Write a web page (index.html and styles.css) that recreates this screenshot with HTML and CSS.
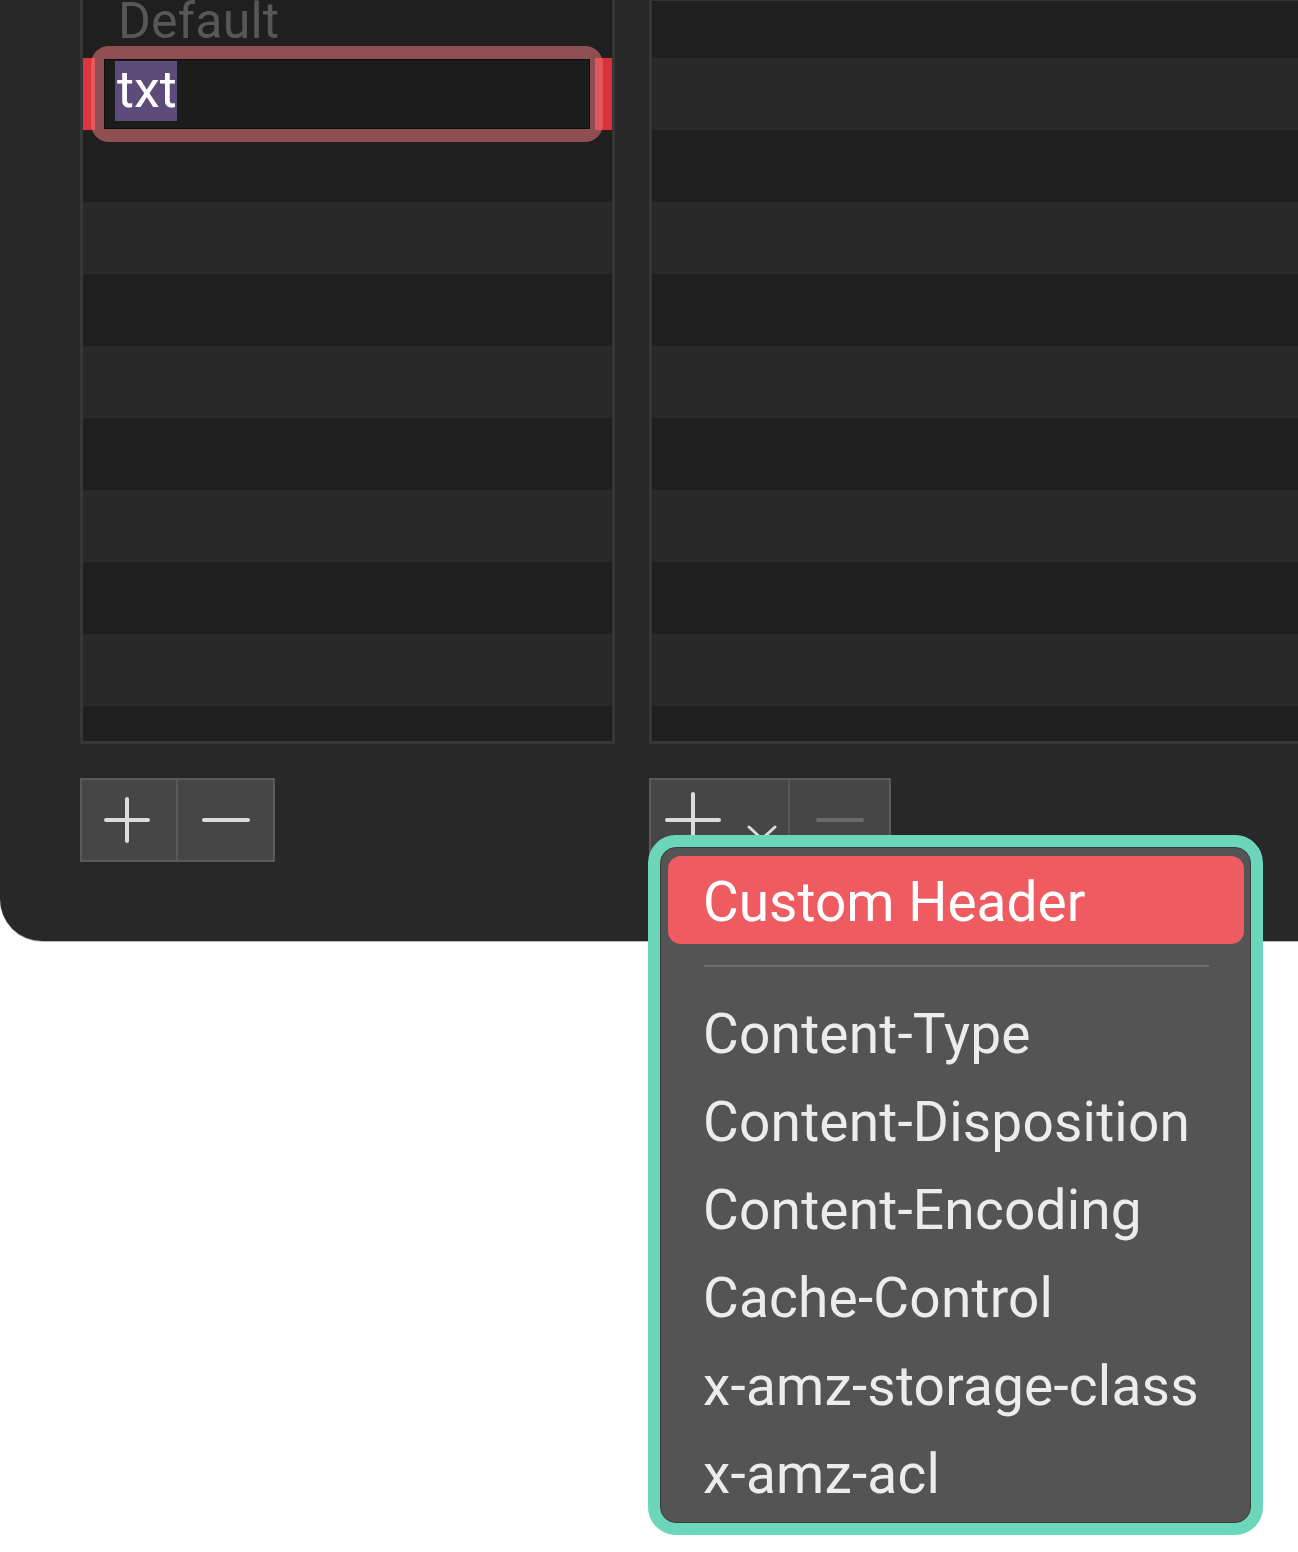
FILE: index.html
```html
<!DOCTYPE html>
<html>
<head>
<meta charset="utf-8">
<title>Headers</title>
<link rel="stylesheet" href="styles.css">
</head>
<body>
<div class="page">
  <div class="window">
    <div class="cols">
      <div class="col">
        <div class="table">
          <div class="row first dark"><span class="placeholder">Default</span></div>
          <div class="row dark edit-row">
            <span class="bar bar-l"></span>
            <span class="bar bar-r"></span>
            <div class="ring"><div class="field"><span class="sel">txt</span></div></div>
          </div>
          <div class="row dark"></div>
          <div class="row light"></div>
          <div class="row dark"></div>
          <div class="row light"></div>
          <div class="row dark"></div>
          <div class="row light"></div>
          <div class="row dark"></div>
          <div class="row light"></div>
          <div class="row dark"></div>
        </div>
        <div class="seg seg-left">
          <div class="seg-btn seg-plus">
            <svg width="46" height="46" viewBox="0 0 46 46"><path d="M23 2V44M2 23H44" stroke="#dcdcdc" stroke-width="4" stroke-linecap="round" fill="none"/></svg>
          </div>
          <div class="seg-btn seg-minus">
            <svg width="48" height="46" viewBox="0 0 48 46"><path d="M2 23H46" stroke="#dcdcdc" stroke-width="4" stroke-linecap="round" fill="none"/></svg>
          </div>
        </div>
      </div>
      <div class="col">
        <div class="table table-right">
          <div class="row first dark"></div>
          <div class="row light"></div>
          <div class="row dark"></div>
          <div class="row light"></div>
          <div class="row dark"></div>
          <div class="row light"></div>
          <div class="row dark"></div>
          <div class="row light"></div>
          <div class="row dark"></div>
          <div class="row light"></div>
          <div class="row dark"></div>
        </div>
        <div class="seg seg-right">
          <div class="seg-btn seg-add">
            <svg class="big-plus" width="56" height="56" viewBox="0 0 56 56"><path d="M28 2V54M2 28H54" stroke="#dcdcdc" stroke-width="4" stroke-linecap="round" fill="none"/></svg>
            <svg class="chev" width="30" height="18" viewBox="0 0 30 18"><path d="M2 3L15 15L28 3" stroke="#dcdcdc" stroke-width="3" stroke-linecap="round" stroke-linejoin="round" fill="none"/></svg>
          </div>
          <div class="seg-btn seg-remove">
            <svg width="48" height="46" viewBox="0 0 48 46"><path d="M2 23H46" stroke="#6a6a6a" stroke-width="4" stroke-linecap="round" fill="none"/></svg>
          </div>
        </div>
      </div>
    </div>
  </div>

  <div class="menu-ring">
    <div class="menu">
      <div class="menu-hl">Custom Header</div>
      <div class="menu-sep"></div>
      <div class="menu-item">Content-Type</div>
      <div class="menu-item">Content-Disposition</div>
      <div class="menu-item">Content-Encoding</div>
      <div class="menu-item">Cache-Control</div>
      <div class="menu-item">x-amz-storage-class</div>
      <div class="menu-item">x-amz-acl</div>
    </div>
  </div>
</div>
</body>
</html>
```

FILE: styles.css
```css
* { box-sizing: border-box; }

html, body {
  margin: 0;
  padding: 0;
  background: #ffffff;
}

body {
  font-family: Roboto, "Liberation Sans", sans-serif;
}

.page {
  position: relative;
  width: 1298px;
  height: 1552px;
  overflow: hidden;
}

.window {
  width: 1298px;
  height: 941px;
  background: #282828;
  border-bottom-left-radius: 42px;
  overflow: hidden;
  box-shadow: 0 1px 0 #b8b8b8;
}

.cols {
  display: grid;
  grid-template-columns: 535px 720px;
  column-gap: 34px;
  padding-left: 80px;
}

.table {
  height: 744px;
  border: 3px solid #363636;
  border-top: 0;
  overflow: hidden;
  background: #1f1f1f;
}

.table-right {
  border-top: 1px solid #333333;
}

.row {
  display: flow-root;
  height: 72px;
}

.row.first {
  height: 58px;
}

.table-right .row.first {
  height: 57px;
}

.dark { background: #1f1f1f; }
.light { background: #292929; }

.placeholder {
  display: block;
  padding-left: 35px;
  font-size: 50px;
  line-height: 42px;
  color: #575757;
  letter-spacing: 0.2px;
}

.edit-row {
  position: relative;
}

.bar {
  position: absolute;
  top: 0;
  height: 72px;
  background: #de343b;
}

.bar-l {
  left: 0;
  width: 12px;
}

.bar-r {
  left: 512px;
  width: 17px;
  background: #d8323a;
}

.ring {
  position: absolute;
  left: 8px;
  top: -12px;
  width: 512px;
  height: 96px;
  border: 13px solid rgba(235, 119, 123, 0.55);
  border-radius: 18px;
  background-clip: padding-box;
}

.field {
  width: 100%;
  height: 100%;
  background: #1c1c1c;
  border: 1px solid #0d0d0d;
  padding: 1px 0 0 10px;
}

.sel {
  display: inline-block;
  height: 60px;
  line-height: 58px;
  padding: 0 0 0 2px;
  background: #5d4c79;
  color: #ffffff;
  font-size: 52px;
}

.seg {
  display: flex;
  margin-top: 34px;
  height: 84px;
  border: 2px solid #5a5a5a;
  background: #464646;
}

.seg-left { width: 195px; }
.seg-right { width: 242px; }

.seg-btn {
  display: flex;
  align-items: center;
  justify-content: center;
  height: 100%;
}

.seg-plus {
  width: 96px;
  border-right: 2px solid #5a5a5a;
  padding-right: 4px;
}

.seg-minus {
  flex: 1;
}

.seg-add {
  width: 139px;
  border-right: 2px solid #5a5a5a;
  justify-content: flex-start;
  padding-left: 14px;
}

.chev {
  margin-left: 26px;
  margin-top: 26px;
}

.seg-remove {
  flex: 1;
}

.menu-ring {
  position: absolute;
  left: 648px;
  top: 835px;
  width: 615px;
  height: 700px;
  border: 12px solid #6cd6bb;
  border-radius: 28px;
  background: #6cd6bb;
}

.menu {
  width: 100%;
  height: 100%;
  background: #545454;
  border: 1px solid #3c3c3c;
  border-radius: 16px;
  padding: 8px 6px 0 7px;
  font-size: 55px;
  color: #ececec;
  letter-spacing: 0.2px;
}

.menu-hl {
  height: 88px;
  padding: 5px 0 0 35px;
  line-height: 82px;
  border-radius: 13px;
  background: #ee5b60;
  color: #ffffff;
  letter-spacing: 0;
}

.menu-sep {
  height: 2px;
  margin: 21px 35px 23px 36px;
  background: #6e6e6e;
}

.menu-item {
  height: 88px;
  line-height: 88px;
  padding-left: 35px;
  white-space: nowrap;
}
```
